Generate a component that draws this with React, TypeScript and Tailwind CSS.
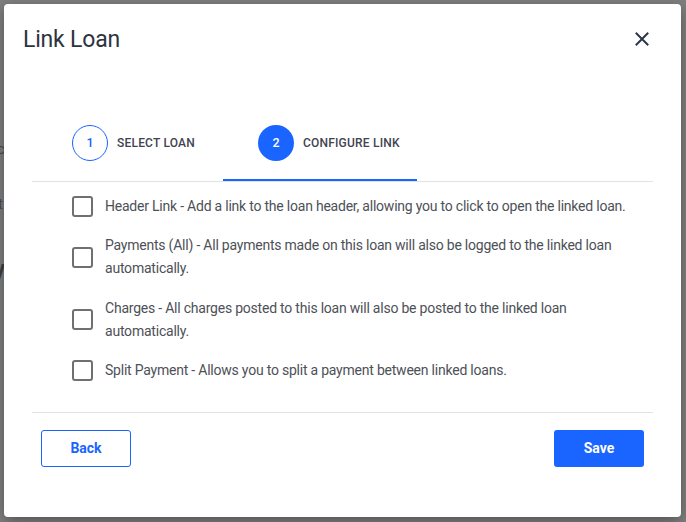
import { useState } from 'react';

const options = [
  'Header Link - Add a link to the loan header, allowing you to click to open the linked loan.',
  'Payments (All) - All payments made on this loan will also be logged to the linked loan automatically.',
  'Charges - All charges posted to this loan will also be posted to the linked loan automatically.',
  'Split Payment - Allows you to split a payment between linked loans.',
];

function CloseIcon() {
  return (
    <svg width="14" height="14" viewBox="0 0 14 14" fill="none" stroke="#2d3748" strokeWidth="2" strokeLinecap="square">
      <path d="M1.5 1.5 L12.5 12.5 M12.5 1.5 L1.5 12.5" />
    </svg>
  );
}

export default function App() {
  const [checked, setChecked] = useState<boolean[]>([false, false, false, false]);

  function toggle(i: number) {
    setChecked((prev) => prev.map((v, idx) => (idx === i ? !v : v)));
  }

  return (
    <div
      className="relative h-[522px] w-[686px] overflow-hidden bg-[#7f7f7f] pl-[4px] pt-[4px]"
      style={{ fontFamily: 'Roboto, "Liberation Sans", sans-serif' }}
    >
      {/* page underneath the overlay */}
      <span className="absolute left-[-3px] top-[138px] text-[15px] text-[#4c4c4c]">c</span>
      <span className="absolute left-[-2px] top-[193px] text-[15px] text-[#4c4c4c]">t</span>
      <span className="absolute left-[-6px] top-[252px] text-[22px] font-bold text-[#3f3f3f]">y</span>

      <div className="relative flex h-[513px] w-[677px] flex-col rounded-[4px] bg-white shadow-[0_4px_14px_rgba(0,0,0,0.35)]">
        <div className="flex items-center justify-between pl-[19px] pr-[32px] pt-[22px]">
          <h1 className="text-[23px] leading-[28px] tracking-[-0.2px] text-[#2d3440]">Link Loan</h1>
          <button className="-mt-[3px] flex h-[14px] w-[14px] items-center justify-center">
            <CloseIcon />
          </button>
        </div>

        <div className="mx-[28px] mt-[53px]">
          <div className="flex border-b border-[#e2e2e2]">
            <div className="flex w-[191px] items-center gap-[9px] border-b-2 border-transparent pb-[18px] pl-[40px] pt-[18px]">
              <div className="flex h-[36px] w-[36px] items-center justify-center rounded-full border-[1.5px] border-[#1a64ff] text-[12.5px] font-medium text-[#1a64ff]">
                1
              </div>
              <span className="text-[12px] font-medium tracking-[0.2px] text-[#3f4450]">SELECT LOAN</span>
            </div>
            <div className="flex w-[194px] items-center gap-[9px] border-b-2 border-[#1a64ff] pb-[18px] pl-[35px] pt-[18px]">
              <div className="flex h-[36px] w-[36px] items-center justify-center rounded-full bg-[#1a64ff] text-[12.5px] font-medium text-white">
                2
              </div>
              <span className="text-[12px] font-medium tracking-[0.2px] text-[#3f4450]">CONFIGURE LINK</span>
            </div>
          </div>

          <div className="flex flex-col gap-[16.5px] pl-[40px] pr-[14px] pt-[12.5px]">
            {options.map((text, i) => (
              <label key={i} className="flex cursor-pointer items-center gap-[12px]">
                <span
                  onClick={() => toggle(i)}
                  className={
                    'h-[21px] w-[21px] shrink-0 rounded-[3px] border-2 ' +
                    (checked[i] ? 'border-[#1a64ff] bg-[#1a64ff]' : 'border-[#707070] bg-white')
                  }
                />
                <span className="text-[14px] leading-[23px] tracking-[-0.22px] text-[#4d5157]">{text}</span>
              </label>
            ))}
          </div>

          <div className="mt-[29.5px] border-t border-[#e2e2e2]" />

          <div className="flex justify-between px-[9px] pt-[17px]">
            <button className="h-[37px] w-[90px] rounded-[3px] border border-[#1a64ff] bg-white text-[14px] font-bold text-[#1a64ff]">
              Back
            </button>
            <button className="h-[37px] w-[90px] rounded-[3px] bg-[#1a64ff] text-[14px] font-bold text-white">
              Save
            </button>
          </div>
        </div>
      </div>
    </div>
  );
}
